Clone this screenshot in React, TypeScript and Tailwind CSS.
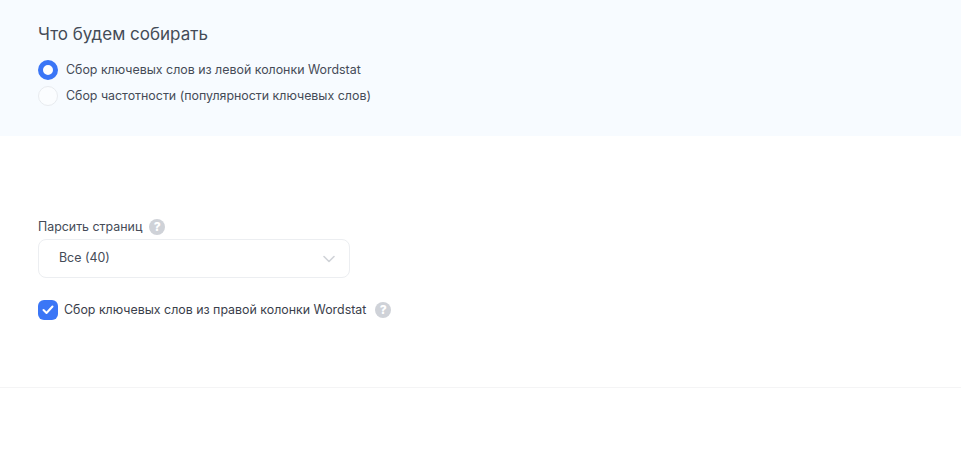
function Help({ className }: { className: string }) {
  return (
    <span className={`flex h-4 w-4 items-center justify-center rounded-full bg-[#cfd2d8] text-[12px] font-extrabold leading-none text-white ${className}`}>
      ?
    </span>
  );
}

export default function App() {
  return (
    <div className="h-[460px] w-[961px] overflow-hidden bg-white font-['Inter','Noto_Sans',sans-serif] text-[#454b57]">
      {/* What to collect */}
      <div className="h-[136px] bg-[#f7fbff] px-[38px] pt-[23px]">
        <h3 className="text-[17px] leading-[22px] text-[#444b57]">Что будем собирать</h3>
        <div className="mt-[15px] flex h-[20px] items-center gap-2">
          <span className="h-5 w-5 rounded-full border-[5px] border-[#3b76f6] bg-white"></span>
          <span className="text-[12.4px]">Сбор ключевых слов из левой колонки Wordstat</span>
        </div>
        <div className="mt-[6px] flex h-[20px] items-center gap-2">
          <span className="h-5 w-5 rounded-full border border-[#e8ebef] bg-[#fbfdff]"></span>
          <span className="text-[12.4px]">Сбор частотности (популярности ключевых слов)</span>
        </div>
      </div>

      {/* Parser options */}
      <div className="h-[252px] border-b border-[#f4f4f5] px-[38px] pt-[81px]">
        <div className="flex h-5 items-center gap-[7px]">
          <span className="text-[12.4px]">Парсить страниц</span>
          <Help className="" />
        </div>
        <div className="mt-[2px] flex h-[39px] w-[312px] items-center justify-between rounded-lg border border-[#eceef1] pl-5 pr-[14px]">
          <span className="text-[12.4px]">Все (40)</span>
          <svg width="12" height="8" viewBox="0 0 12 8" fill="none" stroke="#d0d3d8" strokeWidth="1.6" strokeLinecap="round" strokeLinejoin="round">
            <path d="M1 1.5l5 5 5-5" />
          </svg>
        </div>
        <div className="mt-[22px] flex h-5 items-center">
          <span className="flex h-5 w-5 items-center justify-center rounded-md bg-[#3b76f6]">
            <svg width="12" height="10" viewBox="0 0 12 10" fill="none" stroke="white" strokeWidth="2" strokeLinecap="round" strokeLinejoin="round">
              <path d="M1.5 5l3 3 6-6.5" />
            </svg>
          </span>
          <span className="ml-[6px] text-[12.4px] text-[#3a404b]">Сбор ключевых слов из правой колонки Wordstat</span>
          <Help className="ml-[9px]" />
        </div>
      </div>
    </div>
  );
}
